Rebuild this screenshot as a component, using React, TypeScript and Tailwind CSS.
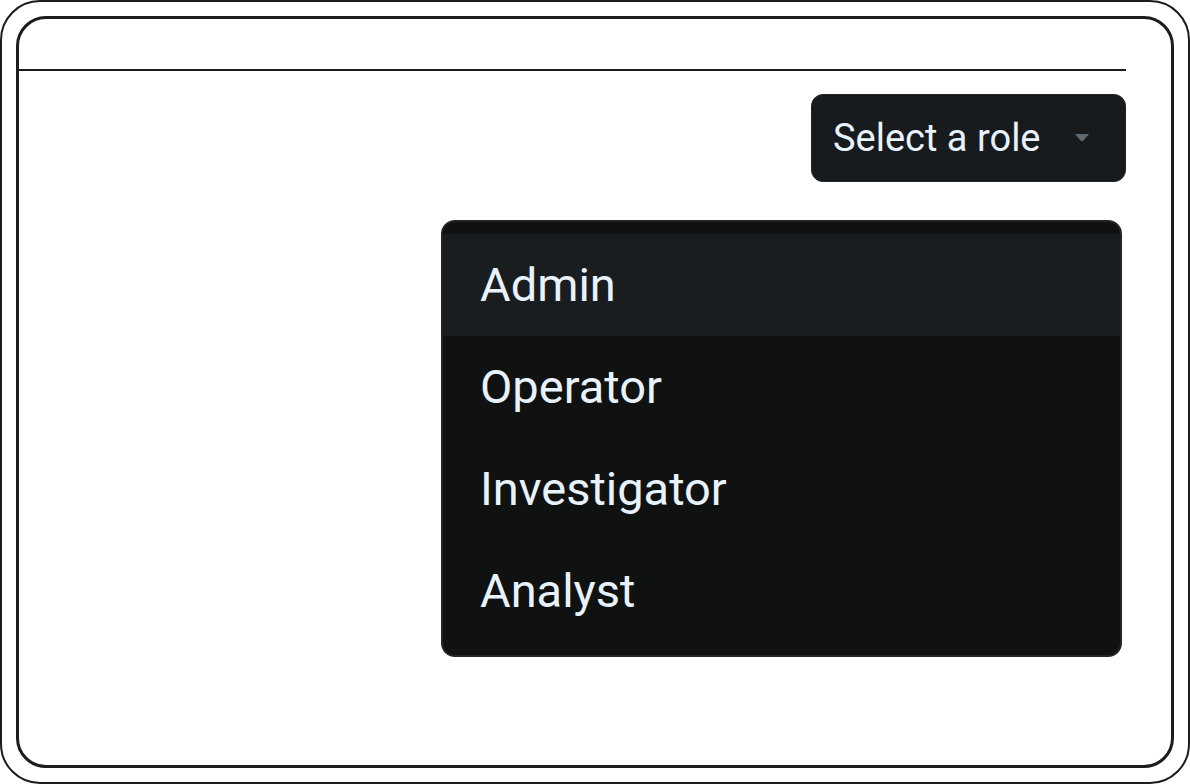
const ROLES = ["Admin", "Operator", "Investigator", "Analyst"];

export default function App() {
  return (
    <div
      className="w-[1190px] h-[784px] bg-white"
      style={{ fontFamily: "Roboto, 'Noto Sans', sans-serif" }}
    >
      <div className="h-full rounded-[40px] border-2 border-[#1c1c1c] p-[14px]">
        <div className="h-full rounded-[30px] border-[3px] border-[#1c1c1c] pr-[45px]">
          <div className="h-[52px] border-b-2 border-[#1c1c1c]" />
          {/* Trigger */}
          <div className="flex justify-end pt-[23px]">
            <button className="flex h-[88px] w-[315px] items-center justify-between rounded-[12px] border border-[#222528] bg-[#181b1e] pl-[21px] pr-[36px] text-[38px] text-[#e8f2fc]">
              <span className="leading-none">Select a role</span>
              <svg width="14" height="8" viewBox="0 0 14 8">
                <path d="M0 0 H14 L8 7 H6 Z" fill="#5f6a73" />
              </svg>
            </button>
          </div>
          {/* Menu */}
          <div className="flex justify-end pr-[4px] pt-[38px]">
            <div className="w-[681px] overflow-hidden rounded-[14px] border-2 border-[#222426] bg-[#101211] pt-[12px] pb-[13px]">
              {ROLES.map((role, i) => (
                <div
                  key={role}
                  className={`flex h-[102px] items-center pl-[37px] text-[47px] text-[#e8f2fc] ${
                    i === 0 ? "bg-[#1a1d20]" : ""
                  }`}
                >
                  {role}
                </div>
              ))}
            </div>
          </div>
        </div>
      </div>
    </div>
  );
}
